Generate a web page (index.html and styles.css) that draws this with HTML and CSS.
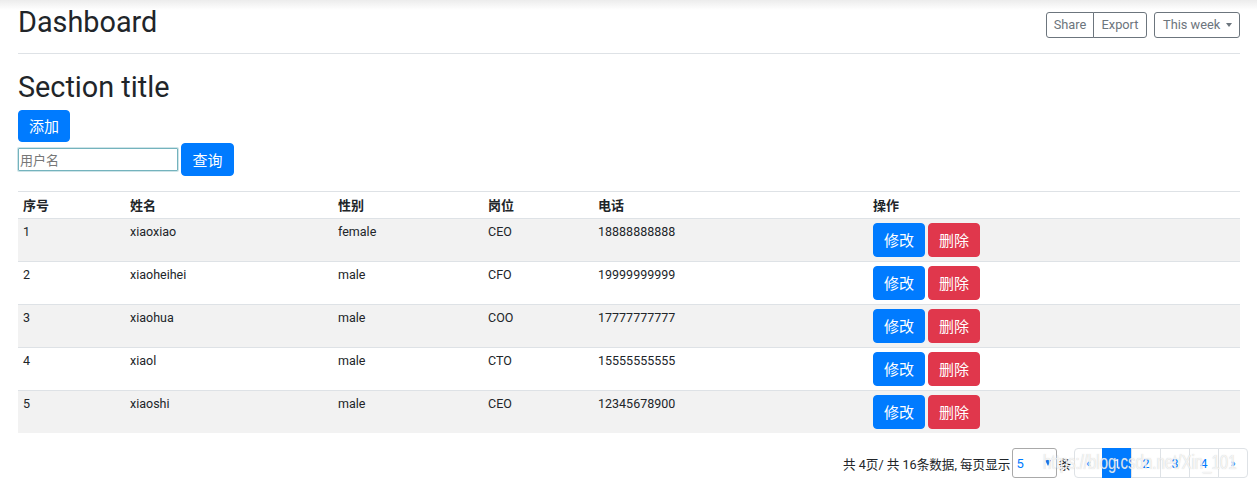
FILE: index.html
```html
<!DOCTYPE html>
<html lang="zh">
<head>
<meta charset="utf-8">
<title>Dashboard</title>
<link rel="stylesheet" href="styles.css">
</head>
<body>
<div class="topshade"></div>
<main class="main">
  <div class="page-head">
    <h1 class="title">Dashboard</h1>
    <div class="toolbar">
      <div class="btn-group">
        <button class="btn-sm">Share</button>
        <button class="btn-sm">Export</button>
      </div>
      <button class="btn-sm dropdown">This week <span class="caret"></span></button>
    </div>
  </div>

  <h2 class="section">Section title</h2>
  <div class="add-row"><button class="btn btn-primary">添加</button></div>
  <div class="search-row">
    <input class="search-input" type="text" placeholder="用户名">
    <button class="btn btn-primary">查询</button>
  </div>

  <table class="table">
    <colgroup>
      <col style="width:107px"><col style="width:208px"><col style="width:150px"><col style="width:110px"><col style="width:275px"><col>
    </colgroup>
    <thead>
      <tr><th>序号</th><th>姓名</th><th>性别</th><th>岗位</th><th>电话</th><th>操作</th></tr>
    </thead>
    <tbody>
      <tr><td>1</td><td>xiaoxiao</td><td>female</td><td>CEO</td><td>18888888888</td><td class="ops"><button class="btn btn-primary">修改</button><button class="btn btn-danger">删除</button></td></tr>
      <tr><td>2</td><td>xiaoheihei</td><td>male</td><td>CFO</td><td>19999999999</td><td class="ops"><button class="btn btn-primary">修改</button><button class="btn btn-danger">删除</button></td></tr>
      <tr><td>3</td><td>xiaohua</td><td>male</td><td>COO</td><td>17777777777</td><td class="ops"><button class="btn btn-primary">修改</button><button class="btn btn-danger">删除</button></td></tr>
      <tr><td>4</td><td>xiaol</td><td>male</td><td>CTO</td><td>15555555555</td><td class="ops"><button class="btn btn-primary">修改</button><button class="btn btn-danger">删除</button></td></tr>
      <tr><td>5</td><td>xiaoshi</td><td>male</td><td>CEO</td><td>12345678900</td><td class="ops"><button class="btn btn-primary">修改</button><button class="btn btn-danger">删除</button></td></tr>
    </tbody>
  </table>

  <div class="pager-row">
    <span class="pager-info">共 4页/ 共 16条数据, 每页显示</span>
    <span class="select-wrap">
      <select class="page-size"><option>5</option><option>10</option></select>
      <span class="select-arrow"></span>
    </span>
    <span class="pager-unit">条</span>
    <ul class="pagination">
      <li class="page-item"><a class="page-link small">«</a></li>
      <li class="page-item active"><a class="page-link">1</a></li>
      <li class="page-item"><a class="page-link">2</a></li>
      <li class="page-item"><a class="page-link">3</a></li>
      <li class="page-item"><a class="page-link">4</a></li>
      <li class="page-item"><a class="page-link small">»</a></li>
    </ul>
  </div>
</main>
<div class="watermark">https://blog.csdn.net/Xin_101</div>
</body>
</html>
```

FILE: styles.css
```css
* { box-sizing: border-box; }
html, body { margin: 0; padding: 0; background: #fff; }
body {
  font-family: Roboto, "Noto Sans CJK SC", "Liberation Sans", sans-serif;
  color: #212529;
  width: 1257px;
  height: 488px;
  overflow: hidden;
  position: relative;
}
.topshade {
  position: absolute;
  left: 0; top: 0; right: 0;
  height: 10px;
  background: linear-gradient(to bottom, #ececec, rgba(255,255,255,0));
  pointer-events: none;
}
.main { padding: 0 17px 0 18px; }

.page-head {
  display: flex;
  justify-content: space-between;
  align-items: flex-start;
  padding-top: 5px;
  padding-bottom: 14px;
  border-bottom: 1px solid #dee2e6;
}
.title {
  margin: 0;
  font-size: 28.8px;
  font-weight: 400;
  line-height: 34px;
}
.toolbar { display: flex; gap: 7px; margin-top: 7px; }
.btn-group { display: flex; }
.btn-sm {
  font-family: Roboto, "Liberation Sans", sans-serif;
  font-size: 12.8px;
  color: #6c757d;
  background: #fff;
  border: 1px solid #6c757d;
  border-radius: 3px;
  height: 26px;
  padding: 0 6px;
  line-height: 24px;
  white-space: nowrap;
}
.btn-group .btn-sm:first-child { border-radius: 3px 0 0 3px; width: 48px; }
.btn-group .btn-sm:last-child { border-radius: 0 3px 3px 0; margin-left: -1px; width: 54px; }
.dropdown { width: 86px; text-align: left; padding-left: 8px; }
.caret {
  display: inline-block;
  width: 0; height: 0;
  margin-left: 3px;
  vertical-align: 2px;
  border-top: 4px solid #6c757d;
  border-left: 3.5px solid transparent;
  border-right: 3.5px solid transparent;
}

.section {
  margin: 16px 0 0;
  font-size: 28.8px;
  font-weight: 400;
  line-height: 34px;
}
.add-row { margin-top: 6px; }
.btn {
  font-family: "Noto Sans CJK SC", Roboto, sans-serif;
  font-size: 15px;
  color: #fff;
  border: 1px solid transparent;
  border-radius: 4px;
  height: 32px;
  width: 52px;
  padding: 0;
  line-height: 30px;
}
.btn-primary { background: #007bff; border-color: #007bff; }
.btn-danger { background: #e0374c; border-color: #e0374c; }
.search-row {
  display: flex;
  align-items: center;
  gap: 3px;
  margin-top: 1px;
}
.search-row .btn { height: 33px; width: 53px; }
.search-input {
  width: 160px;
  height: 23px;
  border: 1px solid #74b3bd;
  box-shadow: 0 0 0 1px rgba(116,179,189,0.35);
  border-radius: 1px;
  padding: 0 1px;
  font-family: "Noto Sans CJK SC", sans-serif;
  font-size: 13px;
  color: #333;
  outline: none;
}
.search-input::placeholder { color: #777; }

.table {
  width: 100%;
  margin-top: 15px;
  border-collapse: collapse;
  table-layout: fixed;
  font-size: 12.5px;
}
.table th, .table td {
  text-align: left;
  vertical-align: top;
  border-top: 1px solid #dee2e6;
  padding: 4px 5px;
}
.table th {
  font-family: "Noto Sans CJK SC", Roboto, sans-serif;
  font-weight: 700;
  font-size: 13px;
  line-height: 17px;
  padding: 4px 5px 5px;
  border-bottom: 1px solid #dee2e6;
}
.table td { line-height: 19px; padding-top: 3px; }
.table tbody tr:nth-child(odd) { background: #f2f2f2; }
.table td.ops { padding: 4px 5px 4px 5px; }
.ops .btn { height: 34px; width: 52px; margin-right: 3px; vertical-align: top; }

.pager-row {
  display: flex;
  justify-content: flex-end;
  align-items: center;
  margin-top: 15px;
  margin-right: -8px;
  font-family: Roboto, "Noto Sans CJK SC", sans-serif;
  font-size: 12.6px;
}
.pager-info { margin-right: 2px; }
.select-wrap { position: relative; display: inline-block; width: 45px; height: 30px; }
.page-size {
  appearance: none;
  -webkit-appearance: none;
  width: 45px;
  height: 30px;
  border: 1px solid #a9a9a9;
  border-radius: 3px;
  background: #fff;
  color: #007bff;
  font-family: Roboto, sans-serif;
  font-size: 13px;
  padding: 0 3px;
}
.select-arrow {
  position: absolute;
  right: 6px;
  top: 12px;
  width: 0; height: 0;
  border-top: 6px solid #1a73e8;
  border-left: 3.5px solid transparent;
  border-right: 3.5px solid transparent;
  pointer-events: none;
}
.pager-unit { margin: 0 3px 0 1px; }
.pagination {
  display: flex;
  list-style: none;
  margin: 0;
  padding: 0;
}
.page-link {
  display: flex;
  align-items: center;
  justify-content: center;
  width: 30px;
  height: 30px;
  border: 1px solid #dee2e6;
  margin-left: -1px;
  color: #007bff;
  background: #fff;
  font-size: 13px;
}
.page-item:first-child .page-link { margin-left: 0; border-radius: 4px 0 0 4px; width: 29px; }
.page-item:last-child .page-link { border-radius: 0 4px 4px 0; }
.page-link.small { font-size: 10px; }
.page-item.active .page-link { background: #007bff; border-color: #007bff; color: #fff; }

.watermark {
  position: absolute;
  left: 1043px;
  top: 451px;
  font-family: "Liberation Sans", Arial, sans-serif;
  font-size: 20px;
  transform: scaleX(0.75);
  transform-origin: left top;
  color: rgba(255,255,255,0.8);
  text-shadow: 0 0 1px rgba(150,150,150,0.55);
  white-space: nowrap;
  pointer-events: none;
}
```
